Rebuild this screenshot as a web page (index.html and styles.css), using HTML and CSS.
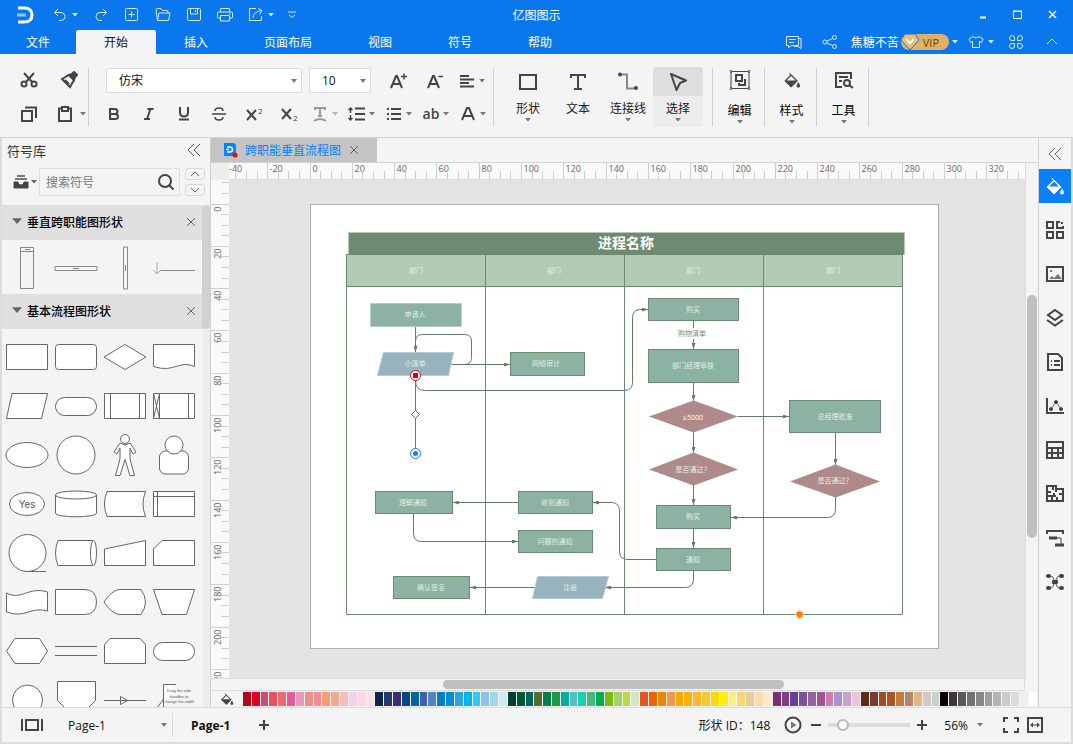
FILE: index.html
```html
<!DOCTYPE html>
<html lang="zh-CN">
<head>
  <meta charset="UTF-8" />
  <meta name="viewport" content="width=device-width, initial-scale=1" />
  <title>亿图图示</title>
  <link rel="stylesheet" href="styles.css">
</head>
<body>
  <svg class="sprite" aria-hidden="true">
    <symbol id="i-caret" viewBox="0 0 6 4"><path d="M0 0h6L3 3.5z" fill="currentColor"/></symbol>
    <symbol id="i-bucket" viewBox="0 0 20 20"><path d="M7 2l2 3" fill="none" stroke="currentColor" stroke-width="2"/><path d="M9 4l7 7-7 7-7-7z" fill="currentColor"/><path class="hole" d="M9 5.500l5 5H4z"/><path d="M17 13q3 5 0 5t0-5" fill="currentColor"/></symbol>
    <symbol id="i-collapse" viewBox="0 0 14 14"><path d="M7 1L1 7l6 6M13 1L7 7l6 6" fill="none" stroke="currentColor"/></symbol>
    <symbol id="i-close" viewBox="0 0 8 8"><path d="M0 0l8 8M8 0L0 8" fill="none" stroke="currentColor"/></symbol>
  </svg>

  <div class="app">
    <header class="titlebar">
      <div class="quick">
        <svg class="logo" width="20" height="18" viewBox="0 0 20 18"><path d="M2 2h6q8 0 8 7t-8 7H2" fill="none" stroke="#fff" stroke-width="3"/><path d="M1 9h9" stroke="#8ec4ff" stroke-width="3"/></svg>
        <div class="split">
          <button class="icon" aria-label="撤销"><svg width="16" height="16" viewBox="0 0 16 16"><path d="M6 2L2.500 5.500 6 9M3 5.500h6q4 0 4 4t-4 4H7"/></svg></button>
          <button class="drop" aria-label="撤销列表"><svg class="caret"><use href="#i-caret"/></svg></button>
        </div>
        <button class="icon" aria-label="重做"><svg width="16" height="16" viewBox="0 0 16 16"><path d="M10 2l3.500 3.500L10 9M13 5.500H7q-4 0-4 4t4 4h2"/></svg></button>
        <button class="icon" aria-label="新建"><svg width="16" height="16" viewBox="0 0 16 16"><rect x="1.500" y="1.500" width="12" height="12" rx="1"/><path d="M7.500 4.500v6M4.500 7.500h6"/></svg></button>
        <button class="icon" aria-label="打开"><svg width="16" height="16" viewBox="0 0 16 16"><path d="M2.500 13.500L1 3q0-1.500 1.500-1.500H6l1.500 2H12q1 0 1 1.500v1M2.500 13.500L4 6h11l-1.500 7.500z"/></svg></button>
        <button class="icon" aria-label="保存"><svg width="16" height="16" viewBox="0 0 16 16"><rect x="1.500" y="1.500" width="13" height="12" rx="1"/><path d="M4.500 1.500v5.500h7V1.500M9.500 3v2"/></svg></button>
        <button class="icon" aria-label="打印"><svg width="16" height="16" viewBox="0 0 16 16"><path d="M3.500 5V1.500h9V5M3.500 11H1.500q-1 0-1-1V6q0-1 1-1h13q1 0 1 1v4q0 1-1 1h-2M3.500 8.500h9v5.500h-9zM12 7h1.500"/></svg></button>
        <div class="split">
          <button class="icon" aria-label="导出"><svg width="16" height="16" viewBox="0 0 16 16"><path d="M8 1.500H1.500v12h12V9M5 11q0-6 8.500-7.500M10 1.500l4 2-2.500 4"/></svg></button>
          <button class="drop" aria-label="导出选项"><svg class="caret"><use href="#i-caret"/></svg></button>
        </div>
        <button class="drop" aria-label="更多"><svg width="8" height="8" viewBox="0 0 8 8"><path d="M0 1h8M1 4l3 2.500L7 4"/></svg></button>
      </div>
      <h1>亿图图示</h1>
      <div class="window-controls">
        <button aria-label="最小化"><svg width="12" height="12" viewBox="0 0 12 12"><path d="M3 8.500h6" stroke-width="2"/></svg></button>
        <button aria-label="最大化"><svg width="12" height="12" viewBox="0 0 12 12"><path d="M1.500 2.500h8v7h-8zM1 2h9"/></svg></button>
        <button aria-label="关闭"><svg width="12" height="12" viewBox="0 0 12 12"><path d="M2 2l7 7M9 2l-7 7" stroke-width="1.500"/></svg></button>
      </div>
    </header>

    <nav class="menubar">
      <div class="tabs">
        <button>文件</button>
        <button class="active">开始</button>
        <button>插入</button>
        <button>页面布局</button>
        <button>视图</button>
        <button>符号</button>
        <button>帮助</button>
      </div>
      <div class="account">
        <button class="icon" aria-label="消息"><svg width="16" height="16" viewBox="0 0 16 16"><path d="M.5 2.500h12v9h-7l-3 2v-2h-2zM3 5.500h7M3 8.500h5M13 4.500h2v10l-3-2H8"/></svg></button>
        <button class="icon" aria-label="分享"><svg width="16" height="16" viewBox="0 0 16 16"><circle cx="3" cy="8" r="2"/><circle cx="12.500" cy="3.500" r="2"/><circle cx="12.500" cy="12.500" r="2"/><path d="M5 7l5.500-2.500M5 9l5.500 2.500"/></svg></button>
        <div class="user">
          <a href="#">焦糖不苦</a>
          <span class="vip"><svg width="18" height="16" viewBox="0 0 18 16"><path d="M4 0h10l4 6-9 10L0 6z" fill="#f0bd68" stroke="#0a78ec"/><path d="M5 5l4 4 4-4" fill="none" stroke="#fff" stroke-width="2"/></svg>VIP</span>
          <button class="drop" aria-label="账户"><svg class="caret"><use href="#i-caret"/></svg></button>
        </div>
        <div class="split">
          <button class="icon" aria-label="主题"><svg width="16" height="16" viewBox="0 0 16 16"><path d="M5 2.500L1 5l1.500 3.500 2-1v6h7v-6l2 1L15 5l-4-2.500q-3 3-6 0z"/></svg></button>
          <button class="drop" aria-label="主题列表"><svg class="caret"><use href="#i-caret"/></svg></button>
        </div>
        <button class="icon" aria-label="应用"><svg width="16" height="16" viewBox="0 0 16 16"><path d="M6.500 6.500h-2.500a2.500 2.500 0 1 1 2.500-2.500zM9.500 6.500h2.500a2.500 2.500 0 1 0-2.500-2.500zM6.500 9.500h-2.500a2.500 2.500 0 1 0 2.500 2.500zM9.500 9.500h2.500a2.500 2.500 0 1 1-2.500 2.500z"/></svg></button>
        <button class="icon" aria-label="收起功能区"><svg width="12" height="12" viewBox="0 0 12 12"><path d="M1 8l5-5 5 5"/></svg></button>
      </div>
    </nav>

    <section class="ribbon">
      <div class="group clipboard">
        <button class="tool" aria-label="剪切"><svg width="18" height="18" viewBox="0 0 18 18"><path d="M4 2l8 9M14 2l-8 9"/><circle cx="4" cy="13" r="2.500"/><circle cx="14" cy="13" r="2.500"/></svg></button>
        <button class="tool" aria-label="格式刷"><svg width="18" height="18" viewBox="0 0 18 18"><path d="M2 8l7-4 5 5-4 7z"/><path d="M9 4l5 5 1-3 2-2-3-3-2 2z" fill="currentColor"/><path d="M5 9l4 4"/></svg></button>
        <button class="tool" aria-label="复制"><svg width="18" height="18" viewBox="0 0 18 18"><path d="M2 6h10v10H2zM5 2.500h11V13"/></svg></button>
        <div class="split">
          <button class="tool narrow" aria-label="粘贴"><svg width="16" height="18" viewBox="0 0 16 18"><path d="M5 3.500H2V16h12V3.500h-3M5 2h6v4H5z"/></svg></button>
          <button class="drop" aria-label="粘贴选项"><svg class="caret"><use href="#i-caret"/></svg></button>
        </div>
      </div>

      <div class="group font">
        <div class="font-row first">
          <div class="select font-name"><select aria-label="字体"><option>仿宋</option></select></div>
          <div class="select font-size"><select aria-label="字号"><option>10</option></select></div>
          <button class="tool wide" aria-label="增大字号"><svg width="18" height="18" viewBox="0 0 18 18"><path d="M2 16L7 4h1l5 12M4 12h7"/><path d="M12 4.500h6M15 1.500v6" stroke-width="1.500"/></svg></button>
          <button class="tool wide" aria-label="减小字号"><svg width="18" height="18" viewBox="0 0 18 18"><path d="M2 16L7 4h1l5 12M4 12h7"/><path d="M12.500 4.500H17" stroke-width="1.500"/></svg></button>
          <div class="split">
            <button class="tool narrow" aria-label="对齐"><svg width="16" height="14" viewBox="0 0 16 14"><path d="M1 2h9M1 5.500h14M1 9h9M1 12.500h14"/></svg></button>
            <button class="drop" aria-label="对齐选项"><svg class="caret"><use href="#i-caret"/></svg></button>
          </div>
        </div>
        <div class="font-row">
          <button class="tool mid" aria-label="粗体"><svg width="14" height="14" viewBox="0 0 14 14"><path d="M3 2h4.500q3 0 3 2.500T7.500 7H3zM3 7h5q3 0 3 2.500T8 12H3z"/></svg></button>
          <button class="tool mid" aria-label="斜体"><svg width="14" height="14" viewBox="0 0 14 14"><path d="M5.500 2h6M2 12h6M8.500 2L5 12"/></svg></button>
          <button class="tool mid" aria-label="下划线"><svg width="14" height="14" viewBox="0 0 14 14"><path d="M3 0v5.500q0 4 4 4t4-4V0M2 12.500h10"/></svg></button>
          <button class="tool mid" aria-label="删除线"><svg width="16" height="14" viewBox="0 0 16 14"><path d="M12 4q0-3-4-3T4 4M12 10q0 3-4 3t-4-3M1 7h14" stroke-width="1.500"/></svg></button>
          <button class="tool mid" aria-label="上标"><svg width="18" height="16" viewBox="0 0 18 16"><path d="M2 4l9 10M11 4L2 14"/><text x="13" y="8">2</text></svg></button>
          <button class="tool mid" aria-label="下标"><svg width="18" height="16" viewBox="0 0 18 16"><path d="M2 3l9 10M11 3L2 13"/><text x="13" y="15">2</text></svg></button>
          <div class="split faded">
            <button class="tool narrow" aria-label="文本样式"><svg width="16" height="16" viewBox="0 0 16 16"><path d="M3 4V2h10v2M8 2v8M6 10h4M2 15q6-4 12 0"/></svg></button>
            <button class="drop" aria-label="文本样式选项"><svg class="caret"><use href="#i-caret"/></svg></button>
          </div>
          <div class="split">
            <button class="tool narrow" aria-label="行距"><svg width="20" height="16" viewBox="0 0 20 16"><path d="M3.500 2v5M3.500 9v5M1.500 4l2-2 2 2M1.500 12l2 2 2-2" stroke-width="1.500"/><path d="M8 2.500h10M8 8h10M8 13.500h10"/></svg></button>
            <button class="drop" aria-label="行距选项"><svg class="caret"><use href="#i-caret"/></svg></button>
          </div>
          <div class="split">
            <button class="tool narrow" aria-label="项目符号"><svg width="16" height="14" viewBox="0 0 16 14"><path d="M1 2h2M5 2h10M1 7h2M5 7h10M1 12h2M5 12h10"/></svg></button>
            <button class="drop" aria-label="项目符号选项"><svg class="caret"><use href="#i-caret"/></svg></button>
          </div>
          <div class="split">
            <button class="tool narrow letters" aria-label="大小写">ab</button>
            <button class="drop" aria-label="大小写选项"><svg class="caret"><use href="#i-caret"/></svg></button>
          </div>
          <div class="split">
            <button class="tool narrow" aria-label="字体颜色"><svg width="16" height="16" viewBox="0 0 16 16"><path d="M2 14L7 2h2l5 12M4 10h8"/></svg></button>
            <button class="drop" aria-label="字体颜色选项"><svg class="caret"><use href="#i-caret"/></svg></button>
          </div>
        </div>
      </div>

      <div class="group insert">
        <button class="big"><svg width="24" height="20" viewBox="0 0 24 20"><path d="M4 3h16v14H4z"/></svg><span>形状</span><svg class="caret"><use href="#i-caret"/></svg></button>
        <button class="big"><svg width="24" height="20" viewBox="0 0 24 20"><path d="M5 6V3h14v3M12 3v14M8 17h8"/></svg><span>文本</span></button>
        <button class="big"><svg width="24" height="20" viewBox="0 0 24 20"><path d="M5 2.500h6v14h8" stroke="#888"/><circle cx="4" cy="2.500" r="1"/><circle cx="20" cy="16" r="1"/></svg><span>连接线</span><svg class="caret"><use href="#i-caret"/></svg></button>
        <button class="big selected"><svg width="24" height="20" viewBox="0 0 24 20"><path d="M5 2l15 6.500-6 2.500-3.500 7z" stroke-linejoin="round"/></svg><span>选择</span><svg class="caret"><use href="#i-caret"/></svg></button>
      </div>

      <div class="group single">
        <button class="big"><svg width="22" height="20" viewBox="0 0 22 20"><path d="M2 1.500h18v17H2z" stroke-width="1"/><path d="M7 5h6v6H7zM16 9v6h-6v-2" /><g fill="#f4f4f4" stroke-width="1"><circle cx="2" cy="1.500" r="1"/><circle cx="20" cy="1.500" r="1"/><circle cx="2" cy="18.500" r="1"/><circle cx="20" cy="18.500" r="1"/></g></svg><span>编辑</span><svg class="caret"><use href="#i-caret"/></svg></button>
      </div>
      <div class="group single">
        <button class="big"><svg width="18" height="20"><use href="#i-bucket"/></svg><span>样式</span><svg class="caret"><use href="#i-caret"/></svg></button>
      </div>
      <div class="group single">
        <button class="big"><svg width="20" height="20" viewBox="0 0 20 20"><path d="M8 17H2V3h15v6M5 7h9M5 11h3"/><circle cx="13" cy="13" r="3"/><path d="M15 15l4 3"/></svg><span>工具</span><svg class="caret"><use href="#i-caret"/></svg></button>
      </div>
    </section>

    <main class="workspace">
      <aside class="library">
        <div class="library-head">
          <h2>符号库</h2>
          <button aria-label="收起符号库"><svg width="14" height="14"><use href="#i-collapse"/></svg></button>
        </div>
        <div class="library-search">
          <button class="stack" aria-label="选择符号库"><svg width="16" height="16" viewBox="0 0 16 16"><path d="M4 2h8M2 5h12" stroke="#777" stroke-width="2"/><path d="M1 8h4q0 3 3 3t3-3h4v6H1z" fill="#444" stroke="#444"/></svg><svg class="caret"><use href="#i-caret"/></svg></button>
          <label class="search">
            <input type="text" placeholder="搜索符号" aria-label="搜索符号">
            <svg width="18" height="18" viewBox="0 0 18 18"><circle cx="8" cy="8" r="6"/><path d="M12 12l4.500 4.500"/></svg>
          </label>
          <div class="steps">
            <button aria-label="上一个"><svg width="10" height="6" viewBox="0 0 10 6"><path d="M1 5l4-4 4 4"/></svg></button>
            <button aria-label="下一个"><svg width="10" height="6" viewBox="0 0 10 6"><path d="M1 1l4 4 4-4"/></svg></button>
          </div>
        </div>
        <div class="library-body">
          <div class="library-scroll">
            <div class="section-head"><svg width="10" height="7"><use href="#i-caret"/></svg><h3>垂直跨职能图形状</h3><button aria-label="关闭"><svg width="8" height="8"><use href="#i-close"/></svg></button></div>
            <div class="shapes lanes">
              <svg viewBox="0 0 44 44"><path d="M15.500 1.500h13v41h-13zM15.500 5.500h13M20 3.500h5"/></svg>
              <svg viewBox="0 0 44 44"><path d="M1 20.500h42v4H1zM19 22.500h6"/></svg>
              <svg viewBox="0 0 44 44"><path d="M20.500 1v42h4V1zM22.500 19v6"/></svg>
              <svg viewBox="0 0 44 44"><path d="M9 24.500h34"/><path d="M5 16v11M1 24l4 4 4-4" stroke="#aaa"/></svg>
            </div>
            <div class="section-head"><svg width="10" height="7"><use href="#i-caret"/></svg><h3>基本流程图形状</h3><button aria-label="关闭"><svg width="8" height="8"><use href="#i-close"/></svg></button></div>
            <div class="shapes">
              <svg viewBox="0 0 44 44"><path d="M1.500 9.500h41v25h-41z"/></svg>
              <svg viewBox="0 0 44 44"><rect x="1.500" y="9.500" width="41" height="25" rx="3"/></svg>
              <svg viewBox="0 0 44 44"><path d="M22 9.500L43 22 22 34.500 1 22z"/></svg>
              <svg viewBox="0 0 44 44"><path d="M1.500 9.500h41v22c-16-7-20 7-41 0z"/></svg>

              <svg viewBox="0 0 44 44"><path d="M7 9.500h35.500l-6 25h-35z"/></svg>
              <svg viewBox="0 0 44 44"><rect x="1.500" y="13.500" width="41" height="18" rx="9"/></svg>
              <svg viewBox="0 0 44 44"><path d="M1.500 9.500h41v25h-41zM7.500 9.500v25M36.500 9.500v25"/></svg>
              <svg viewBox="0 0 44 44"><path d="M1.500 9.500h41v25h-41zM7.500 9.500v25M36.500 9.500v25M1.500 9.500l6 25M7.500 9.500l-6 25"/></svg>

              <svg viewBox="0 0 44 44"><ellipse cx="22" cy="22" rx="21" ry="12.500"/></svg>
              <svg viewBox="0 0 44 44"><circle cx="22" cy="22" r="19"/></svg>
              <svg viewBox="0 0 44 44"><circle cx="22" cy="6" r="4.500"/><path d="M17 10l-6 9 3 2 3-6v11l-4.500 16.500h4.500l5-16 5 16h4.500L27 26V15l3 6 3-2-6-9-5 2z"/></svg>
              <svg viewBox="0 0 44 44"><rect x="7.500" y="18" width="29" height="23" rx="6"/><circle cx="22" cy="12" r="9"/></svg>

              <svg viewBox="0 0 44 44"><ellipse cx="22" cy="22" rx="17.500" ry="11.500"/><text x="22" y="26">Yes</text></svg>
              <svg viewBox="0 0 44 44"><path d="M1.500 13v18c0 5 41 5 41 0V13"/><ellipse cx="22" cy="13" rx="20.500" ry="4"/></svg>
              <svg viewBox="0 0 44 44"><path d="M4 9.500h38.500q-5 12.500 0 25H4q-5-12.500 0-25z"/></svg>
              <svg viewBox="0 0 44 44"><path d="M1.500 9.500h41v25h-41zM5.500 9.500v25M1.500 14.500h41"/></svg>

              <svg viewBox="0 0 44 44"><circle cx="22.500" cy="22" r="18.500"/><path d="M22 40.500h19"/></svg>
              <svg viewBox="0 0 44 44"><path d="M4 9.500h35v25H4q-5-12.500 0-25z"/><ellipse cx="39.500" cy="22" rx="3" ry="12.500"/></svg>
              <svg viewBox="0 0 44 44"><path d="M1.500 18l41-8.500v25h-41z"/></svg>
              <svg viewBox="0 0 44 44"><path d="M10 9.500h32.500v25h-41V18z"/></svg>

              <svg viewBox="0 0 44 44"><path d="M1.500 13c15 8 22-7 41-1v19c-17-5-22 8-41 1z"/></svg>
              <svg viewBox="0 0 44 44"><path d="M1.500 9.500H30q12.500 0 12.500 12.500T30 34.500H1.500z"/></svg>
              <svg viewBox="0 0 44 44"><path d="M16 9.500h22q9 12.500 0 25H16Q8 33 1 22 8 11 16 9.500z"/></svg>
              <svg viewBox="0 0 44 44"><path d="M1.500 9.500h41l-8 25H10z"/></svg>

              <svg viewBox="0 0 44 44"><path d="M10 9.500h24.500L42.500 22l-8 12.500H10L1.500 22z"/></svg>
              <svg viewBox="0 0 44 44"><path d="M1 17.500h42M1 26.500h42"/></svg>
              <svg viewBox="0 0 44 44"><path d="M7 9.500h30l5.500 6v19h-41v-19z"/></svg>
              <svg viewBox="0 0 44 44"><rect x="1.500" y="13.500" width="41" height="18" rx="9"/></svg>

              <svg viewBox="0 0 44 44"><circle cx="22.500" cy="22" r="15"/></svg>
              <svg viewBox="0 0 44 44"><path d="M3.500 3.500h38v19L30 34H15L3.500 22.500z"/></svg>
              <svg viewBox="0 0 44 44"><path d="M1 22.500h42M17.500 18.500v8l7-4z"/></svg>
              <svg viewBox="0 0 44 44"><path d="M24 6.500H11.500V30M11.500 21L5 30"/><g class="note"><text x="27" y="14">Drag the side</text><text x="27" y="20">handles to</text><text x="27" y="25">change the width</text></g></svg>
            </div>
          </div>
          <div class="library-track"><div class="library-thumb"></div></div>
        </div>
      </aside>

      <section class="editor">
        <div class="doc-tabs">
          <div class="doc-tab">
            <svg width="16" height="16" viewBox="0 0 16 16"><path d="M2 1h10l2 2v11H2z" fill="#0a80ff"/><path d="M5 5h2.500q3 0 3 2.500T7.500 10H5M4 7.500h3" fill="none" stroke="#fff" stroke-width="1.500"/><circle cx="13" cy="13" r="2.500" fill="#f00"/></svg>
            <a href="#">跨职能垂直流程图</a>
            <button aria-label="关闭文档"><svg width="8" height="8"><use href="#i-close"/></svg></button>
          </div>
        </div>
        <div class="stage">
          <div class="corner"></div>
          <svg class="ruler-h" id="rulerH"></svg>
          <svg class="ruler-v" id="rulerV"></svg>
          <div class="canvas">
            <svg class="sheet" width="629" height="445" viewBox="310 204 629 445">
              <defs>
                <marker id="arrow" viewBox="0 0 6 4" refX="6" refY="2" markerWidth="6" markerHeight="4" orient="auto" markerUnits="userSpaceOnUse"><path d="M0 0l6 2-6 2z" fill="#5f7d62"/></marker>
              </defs>
              <rect class="lane-title" x="348.500" y="232.500" width="556" height="22"/>
              <rect class="lane-head" x="346.500" y="254.500" width="556" height="32"/>
              <path class="lane-line" d="M346.500 286V614.500h556V286M485.500 254V614M624.500 254V614M763.500 254V614"/>
              <text class="title" x="626" y="248">进程名称</text>

              <g class="link">
                <path d="M415.500 327V352"/>
                <path class="plain" d="M451 364.500H464q7.500 0 7.500-7V341q0-6.500-7-6.500H423q-7.500 0-7.500 7"/>
                <path d="M451 364.500H510"/>
                <path class="plain" d="M415.500 376V450"/>
                <path d="M415.500 380q0 10.500 9 10.500H624q8.500 0 8.500-8V318q0-8.500 8-8.500H648"/>
                <path class="plain" d="M693.500 321V328"/>
                <path d="M693.500 339V349"/>
                <path d="M693.500 383V401"/>
                <path d="M693.500 432V453"/>
                <path d="M693.500 485V505"/>
                <path d="M693.500 529V548"/>
                <path d="M738 416.500H789"/>
                <path d="M835.500 433V465"/>
                <path d="M835.500 497V509q0 8.500-8 8.500H731"/>
                <path d="M656 559.500H628q-8.500 0-8.500-8V511q0-8.500-8-8.500H593"/>
                <path d="M518 502.500H453"/>
                <path d="M413.500 514V533q0 8.500 8 8.500H518"/>
                <path d="M693.500 571V579q0 8.500-8 8.500H605"/>
                <path d="M535 587.500H470"/>
              </g>

              <g class="process">
                <rect class="light" x="370.500" y="303.500" width="91" height="23"/>
                <rect x="510.500" y="352.500" width="74" height="23"/>
                <rect x="648.500" y="298.500" width="90" height="22"/>
                <rect x="648.500" y="349.500" width="90" height="33"/>
                <rect x="789.500" y="400.500" width="91" height="32"/>
                <rect x="656.500" y="505.500" width="74" height="23"/>
                <rect x="656.500" y="548.500" width="74" height="22"/>
                <rect x="375.500" y="491.500" width="77" height="22"/>
                <rect x="518.500" y="491.500" width="74" height="22"/>
                <rect x="518.500" y="530.500" width="74" height="22"/>
                <rect x="393.500" y="576.500" width="76" height="22"/>
              </g>
              <path class="data" d="M383.500 352.500H453.500L448.500 375.500H377.500zM537.500 576.500H608.500L602.500 598.500H532.500z"/>
              <path class="decision" d="M649 416.500L693.500 400.500 738 416.500 693.500 432.500zM649 469.500L693.500 452.500 738 469.500 693.500 485.500zM790 481.500L835.500 464.500 880 481.500 835.500 497.500z"/>

              <g class="label">
                <text x="416" y="273">部门</text>
                <text x="554" y="273">部门</text>
                <text x="693" y="273">部门</text>
                <text x="833" y="273">部门</text>
                <text x="415" y="317">申请人</text>
                <text x="415" y="366">小清单</text>
                <text x="546" y="366">网络审计</text>
                <text x="693" y="312">购买</text>
                <text class="dark" x="692" y="336">购物清单</text>
                <text x="693" y="368">部门经理审核</text>
                <text class="number" x="693" y="420">≥5000</text>
                <text x="693" y="472">是否通过？</text>
                <text x="693" y="519">购买</text>
                <text x="693" y="562">通知</text>
                <text x="835" y="419">总经理批准</text>
                <text x="835" y="483">是否通过？</text>
                <text x="413" y="505">理解通知</text>
                <text x="555" y="505">收到通知</text>
                <text x="555" y="544">问题的通知</text>
                <text x="431" y="590">确认签名</text>
                <text x="570" y="590">注册</text>
              </g>

              <circle cx="415.500" cy="375.500" r="5" fill="#fff" stroke="#d8000f"/>
              <rect x="413" y="373" width="5" height="5" fill="#d8000f"/>
              <path d="M415.500 410.500l4 4-4 4-4-4z" fill="#fff" stroke="#3c6f9c"/>
              <circle cx="415.500" cy="453.500" r="5" fill="#fff" stroke="#0a80ff"/>
              <circle cx="415.500" cy="453.500" r="2.500" fill="#0a80ff"/>
              <circle cx="799.500" cy="614.500" r="4" fill="#ff8000" stroke="#fff"/>
            </svg>
          </div>
          <div class="scroll-v"><div class="thumb"></div></div>
          <div class="scroll-h"><div class="thumb"></div></div>
        </div>
        <div class="palette">
          <button class="fill" aria-label="填充"><svg width="14" height="14"><use href="#i-bucket"/></svg></button>
          <div class="swatches" id="swatches"></div>
        </div>
      </section>

      <aside class="rail">
        <button class="expand" aria-label="展开"><svg width="14" height="14"><use href="#i-collapse"/></svg></button>
        <button class="active" aria-label="填充样式"><svg width="20" height="20"><use href="#i-bucket"/></svg></button>
        <button aria-label="符号"><svg width="20" height="20" viewBox="0 0 20 20"><path d="M2 2h6v6H2zM2 12h6v6H2zM12 12h6v6h-6zM15 2h-3v6h6V6"/><path d="M16 3h2"/></svg></button>
        <button aria-label="图片"><svg width="20" height="20" viewBox="0 0 20 20"><path d="M2 3h16v14H2z"/><path d="M4 15l3-3 2 2 4-4 4 5z" fill="#777" stroke="none"/><path d="M5 7h2" stroke="#777"/></svg></button>
        <button aria-label="图层"><svg width="20" height="20" viewBox="0 0 20 20"><path d="M10 2l7 5-7 5-7-5zM2 12l8 5.500 8-5.500"/></svg></button>
        <button aria-label="文档"><svg width="20" height="20" viewBox="0 0 20 20"><path d="M3 2h10l4 4v12H3z"/><path d="M6 9h1M9 9h6M6 13h1M9 13h6"/></svg></button>
        <button aria-label="图表"><svg width="20" height="20" viewBox="0 0 20 20"><path d="M2 2v15h17"/><path d="M6 13l5-7 5 7" stroke="#777" stroke-width="1"/><g fill="currentColor" stroke-width="1"><circle cx="6" cy="13" r="1.500"/><circle cx="11" cy="6" r="1.500"/><circle cx="16" cy="13" r="1.500"/></g></svg></button>
        <button aria-label="表格"><svg width="20" height="20" viewBox="0 0 20 20"><path d="M2 2h16v16H2zM2 8h16M2 13h16M7 8v10M13 8v10"/></svg></button>
        <button aria-label="平面图"><svg width="20" height="20" viewBox="0 0 20 20"><path d="M11 5V2H2v15h16V5h-7M2 8h4M8 3v3M2 12h5v5M11 5v3M12 17v-4M9 9v3h2M14 10h4" /></svg></button>
        <button aria-label="甘特图"><svg width="20" height="20" viewBox="0 0 20 20"><path d="M2 6V3h16v3"/><path d="M4 10h8M10 17h9" stroke-width="3"/><path d="M12 10h4v6" stroke-width="1"/></svg></button>
        <button aria-label="思维导图"><svg width="20" height="20" viewBox="0 0 20 20"><path d="M5 4q4 0 4 6t-4 6M15 4q-4 0-4 6t4 6" stroke-width="1"/><g fill="currentColor" stroke="none"><rect x="1" y="2" width="5" height="4" rx="2"/><rect x="14" y="2" width="5" height="4" rx="2"/><rect x="1" y="14" width="5" height="4" rx="2"/><rect x="14" y="14" width="5" height="4" rx="2"/><rect x="7" y="8" width="6" height="4" rx="1"/></g></svg></button>
      </aside>
    </main>

    <footer class="statusbar">
      <button class="layout" aria-label="页面视图"><svg width="22" height="14" viewBox="0 0 22 14"><path d="M5 2h12v10H5z"/><path d="M1 1v12M21 1v12"/></svg></button>
      <div class="page-select"><select aria-label="页面"><option>Page-1</option></select></div>
      <button class="page-tab">Page-1</button>
      <button class="add" aria-label="添加页面"><svg width="12" height="12" viewBox="0 0 12 12"><path d="M6 1v10M1 6h10"/></svg></button>
      <div class="status-right">
        <span>形状 ID：148</span>
        <button aria-label="放映"><svg width="18" height="18" viewBox="0 0 18 18"><circle cx="9" cy="9" r="7.500"/><path d="M7 5.500l5.500 3.500L7 12.500z" fill="#777" stroke="none"/></svg></button>
        <button aria-label="缩小"><svg width="12" height="12" viewBox="0 0 12 12"><path d="M1 6h10"/></svg></button>
        <input type="range" min="0" max="100" value="12" aria-label="缩放">
        <button aria-label="放大"><svg width="12" height="12" viewBox="0 0 12 12"><path d="M6 1v10M1 6h10"/></svg></button>
        <button class="zoom">56%<svg class="caret"><use href="#i-caret"/></svg></button>
        <button aria-label="全屏"><svg width="16" height="16" viewBox="0 0 16 16"><path d="M1 5V1h4M11 1h4v4M15 11v4h-4M5 15H1v-4"/></svg></button>
        <button aria-label="适应宽度"><svg width="16" height="16" viewBox="0 0 16 16"><path d="M1 1h14v14H1z"/><path d="M5 8h6" stroke-width="1"/><path d="M3 8l3-2.500v5zM13 8l-3-2.500v5z" fill="currentColor" stroke="none"/></svg></button>
      </div>
    </footer>
  </div>

  <script src="script.js"></script>
</body>
</html>
```
FILE: styles.css
```css
* {
  box-sizing: border-box;
}

body {
  margin: 0;
  font-family: 'Open Sans', 'Noto Sans CJK SC', sans-serif;
  font-size: 12px;
  color: #111;
  background: #f4f4f4;
}

h1, h2, h3 {
  margin: 0;
  font-weight: normal;
}

button {
  display: flex;
  align-items: center;
  justify-content: center;
  margin: 0;
  padding: 0;
  border: none;
  background: none;
  font: inherit;
  color: inherit;
  cursor: pointer;
}

select, input {
  font: inherit;
  color: inherit;
}

a {
  color: inherit;
  text-decoration: none;
}

button svg {
  fill: none;
  stroke: currentColor;
}

svg {
  flex: none;
}

.sprite {
  display: none;
}

.caret {
  width: 6px;
  height: 4px;
  stroke: none;
}

.app {
  display: flex;
  flex-direction: column;
  height: 100vh;
}

/* title bar */
.titlebar {
  display: grid;
  grid-template-columns: 1fr auto 1fr;
  align-items: center;
  height: 30px;
  background: #0a78ec;
  color: #fff;
}

.titlebar h1 {
  font-size: 12px;
}

.quick {
  display: flex;
  align-items: center;
  gap: 11px;
  padding-left: 16px;
}

.quick button, .account button {
  color: #d5e8ff;
}

.logo {
  margin-right: 3px;
}

.split {
  display: flex;
  align-items: center;
}

.icon {
  width: 20px;
  height: 20px;
}

.drop {
  width: 10px;
  height: 20px;
}

.window-controls {
  display: flex;
  justify-content: flex-end;
  padding-right: 3px;
}

.window-controls button {
  width: 35px;
  height: 28px;
}

/* menu tabs */
.menubar {
  display: flex;
  justify-content: space-between;
  height: 24px;
  background: #0a78ec;
  color: #fff;
}

.tabs {
  display: flex;
}

.tabs button {
  padding: 0 28px;
}

.tabs button:first-child {
  padding: 0 26px;
}

.tabs .active {
  background: #f4f4f4;
  color: #111;
  border-radius: 2px 2px 0 0;
}

.account {
  display: flex;
  align-items: center;
  gap: 14px;
  padding-right: 9px;
}

.account .icon {
  margin-right: 2px;
}

.account .split {
  margin-right: -4px;
}

.account .split .icon {
  margin-right: 0;
}

.user {
  display: flex;
  align-items: center;
  margin: 0 -8px 0 -5px;
}

.vip {
  display: flex;
  align-items: center;
  gap: 4px;
  height: 16px;
  margin: 0 1px 0 2px;
  padding-right: 10px;
  border-radius: 8px;
  background: #e0b064;
  color: #6b4710;
  font-size: 11px;
}

/* ribbon */
.ribbon {
  display: flex;
  height: 84px;
  padding: 14px 0 12px 2px;
  border-bottom: 1px solid #d4d4d4;
  color: #444;
}

.group {
  height: 58px;
  border-right: 1px solid #d0d0d0;
}

.ribbon button svg {
  stroke-width: 2;
}

.ribbon .caret {
  color: #777;
}

.clipboard {
  display: grid;
  grid-template-columns: 40px 36px;
  row-gap: 10px;
  padding-left: 10px;
}

.tool {
  width: 34px;
  height: 24px;
}

.tool.wide {
  width: 37px;
}

.tool.mid {
  width: 35px;
}

.tool.narrow {
  width: 20px;
}

.clipboard .split .narrow {
  width: 28px;
}

.tool text {
  font-size: 8px;
  fill: currentColor;
  stroke: none;
}

.tool.letters {
  font-size: 14px;
  font-weight: 600;
}

.font {
  display: flex;
  flex-direction: column;
  gap: 8px;
  padding: 0 2px 0 7px;
}

.font-row {
  display: flex;
  align-items: center;
  height: 26px;
}

.font-row.first {
  padding-left: 10px;
}

.font-row .split {
  width: 37px;
  padding-left: 4px;
}

.faded {
  opacity: 0.5;
}

.select, .page-select {
  position: relative;
  display: flex;
}

.select::after, .page-select::after {
  content: '';
  position: absolute;
  right: 5px;
  top: 50%;
  margin-top: -2px;
  border: 3px solid transparent;
  border-top: 4px solid #777;
  border-bottom: none;
  pointer-events: none;
}

.select select {
  appearance: none;
  width: 100%;
  height: 25px;
  padding: 0 12px;
  border: 1px solid #d9d9de;
  border-radius: 2px;
  background: #fff;
  color: #111;
}

.font-name {
  width: 196px;
}

.font-size {
  width: 62px;
  margin: 0 8px 0 7px;
}

.insert {
  display: flex;
  padding: 0 9px;
}

.big {
  flex-direction: column;
  justify-content: flex-start;
  width: 50px;
  height: 60px;
  margin-top: -1px;
  padding-top: 5px;
  color: #444;
}

.big span {
  margin-top: 8px;
  line-height: 18px;
  color: #222;
}

.selected {
  border-radius: 2px;
  background: linear-gradient(#dedede 29px, #ececec 29px);
}

.single .big {
  width: 51px;
  padding: 3px 0 0 2px;
}

.single .big span {
  margin-top: 12px;
  color: #000;
}

.hole {
  fill: var(--hole, #f4f4f4);
  stroke: none;
}

#i-bucket path {
  stroke-width: 1;
}

/* workspace */
.workspace {
  display: flex;
  flex: 1;
  min-height: 0;
  border-left: 2px solid #dcdcdc;
  border-right: 2px solid #dcdcdc;
}

.library {
  display: flex;
  flex-direction: column;
  width: 209px;
  border-right: 1px solid #cfcfcf;
}

.library-head {
  display: flex;
  align-items: center;
  justify-content: space-between;
  height: 26px;
  padding: 0 9px 2px 5px;
  color: #555;
}

.library-head h2 {
  font-size: 13px;
  color: #333;
}

.library-search {
  display: flex;
  align-items: center;
  height: 41px;
  padding: 0 5px 5px 11px;
}

.stack {
  gap: 2px;
  color: #666;
}

.search {
  display: flex;
  flex: 1;
  align-items: center;
  height: 28px;
  margin: 0 5px 0 2px;
  padding: 0 4px 0 6px;
  border: 1px solid #dedede;
  border-radius: 2px;
}

.search input {
  flex: 1;
  width: 0;
  padding: 0;
  border: none;
  outline: none;
  background: none;
}

.search input::placeholder {
  color: #777;
}

.search svg {
  fill: none;
  stroke: #444;
  stroke-width: 2;
}

.steps {
  display: flex;
  flex-direction: column;
  gap: 4px;
}

.steps button {
  width: 20px;
  height: 12px;
  border: 1px solid #d8d8d8;
  border-radius: 3px;
  color: #666;
}

.library-body {
  display: flex;
  flex: 1;
  min-height: 0;
}

.library-scroll {
  flex: 1;
  overflow: hidden;
}

.library-track {
  width: 8px;
  background: #ededed;
}

.library-thumb {
  height: 124px;
  border-radius: 4px;
  background: #d0d0d0;
}

.section-head {
  display: flex;
  align-items: center;
  gap: 5px;
  height: 35px;
  padding: 0 7px 2px 10px;
  background: #dfdfdf;
  color: #666;
}

.section-head h3 {
  flex: 1;
  font-size: 12px;
  font-weight: 500;
  color: #000;
}

.shapes {
  display: grid;
  grid-template-columns: repeat(4, 49px);
  grid-auto-rows: 49px;
  place-items: center;
  padding-top: 3px;
}

.shapes.lanes {
  padding: 3px 0 2px;
}

.shapes svg {
  width: 44px;
  height: 44px;
  fill: #fff;
  stroke: #666;
}

.shapes.lanes svg {
  fill: none;
  stroke: #888;
}

.shapes text {
  font-family: 'Liberation Sans', sans-serif;
  font-size: 10px;
  text-anchor: middle;
  fill: #555;
  stroke: none;
}

.shapes .note text {
  font-size: 4px;
}

/* editor */
.editor {
  display: flex;
  flex: 1;
  flex-direction: column;
  min-width: 0;
}

.doc-tabs {
  height: 25px;
  border-bottom: 1px solid #d4d4d4;
}

.doc-tab {
  display: flex;
  align-items: center;
  width: 166px;
  height: 24px;
  padding-left: 11px;
  background: #c4c4c4;
  color: #666;
}

.doc-tab a {
  margin: 0 5px 0 7px;
  color: #0a80ff;
}

.doc-tab button {
  padding: 4px;
}

.stage {
  display: grid;
  grid-template-columns: 18px 1fr 13px;
  grid-template-rows: 17px 1fr 13px;
  flex: 1;
  min-height: 0;
}

.corner {
  background: #ededed;
}

.ruler-h, .ruler-v {
  width: 100%;
  height: 100%;
  overflow: hidden;
  background: #fafafa;
  stroke: #d0d0d0;
}

.ruler-h {
  border-bottom: 1px solid #dcdcdc;
}

.ruler-v {
  grid-row: 2;
}

.ruler-h text, .ruler-v text {
  font-size: 9px;
  fill: #666;
  stroke: none;
}

.canvas {
  grid-row: 2;
  grid-column: 2;
  overflow: hidden;
  padding: 24px 0 0 81px;
  background: #e4e4e4;
}

.scroll-v {
  grid-row: 1 / 3;
  grid-column: 3;
  display: grid;
  grid-template-rows: 132fr 243fr 140fr;
  padding: 0 1px;
  border-left: 1px solid #dcdcdc;
}

.scroll-v .thumb {
  grid-row: 2;
  border-radius: 5px;
  background: #bfbfbf;
}

.scroll-h {
  grid-row: 3;
  grid-column: 1 / 3;
  display: grid;
  grid-template-columns: 232fr 342fr 240fr;
  padding: 1px 0;
  border: 1px solid #dcdcdc;
  border-left: none;
}

.scroll-h .thumb {
  grid-column: 2;
  border-radius: 5px;
  background: #bfbfbf;
}

.palette {
  display: flex;
  align-items: center;
  height: 16px;
}

.fill {
  width: 32px;
  color: #444;
}

.swatches {
  display: flex;
  flex: 1;
  gap: 1px;
  height: 14px;
  margin-right: 1px;
}

.swatches button {
  flex: 1;
}

/* sheet and diagram */
.sheet {
  display: block;
  background: #fff;
  outline: 1px solid #b0b0b0;
  outline-offset: -1px;
}

.lane-title {
  fill: #6e8a70;
  stroke: #b4cab4;
}

.lane-head {
  fill: #b3cbb5;
  stroke: #6b8a6d;
}

.lane-line {
  fill: none;
  stroke: #6b8a6d;
}

.title {
  font-size: 14px;
  font-weight: bold;
  text-anchor: middle;
  fill: #fff;
}

.link path {
  fill: none;
  stroke: #5f7d62;
  marker-end: url(#arrow);
}

.link .plain {
  marker-end: none;
}

.process rect {
  fill: #8bb2a3;
  stroke: #6b8a6d;
}

.process .light {
  stroke: #b4d0c6;
}

.data {
  fill: #97b3bd;
  stroke: #b5cad1;
}

.decision {
  fill: #ae8a8a;
}

.label text {
  font-size: 7px;
  text-anchor: middle;
  fill: #e4ece6;
}

.label .dark {
  fill: #7d9080;
}

.label .number {
  fill: #fff;
}

/* right rail */
.rail {
  display: flex;
  flex-direction: column;
  gap: 10px;
  width: 33px;
  border-left: 1px solid #cfcfcf;
  color: #444;
}

.rail button {
  width: 32px;
  height: 34px;
}

.rail button svg {
  stroke-width: 2;
}

.rail .expand {
  height: 31px;
  margin-bottom: -10px;
  color: #666;
}

.rail .expand svg {
  stroke-width: 1;
}

.rail .active {
  --hole: #0a80ff;
  background: #0a80ff;
  color: #fff;
}

/* status bar */
.statusbar {
  display: flex;
  align-items: center;
  height: 37px;
  padding-left: 17px;
  border: 2px solid #dcdcdc;
  border-top-width: 1px;
  color: #111;
}

.statusbar button svg {
  color: #444;
  stroke-width: 2;
}

.layout {
  width: 26px;
}

.page-select {
  width: 128px;
  height: 24px;
  border-right: 1px solid #dcdcdc;
}

.page-select select {
  appearance: none;
  width: 100%;
  padding: 0 0 0 23px;
  border: none;
  background: none;
}

.page-tab {
  padding: 0 28px 0 18px;
  font-weight: bold;
}

.status-right {
  display: flex;
  align-items: center;
  gap: 8px;
  margin-left: auto;
  padding-right: 28px;
}

.status-right span {
  margin-right: 6px;
}

.zoom {
  gap: 9px;
  margin: 0 12px 0 8px;
}

.statusbar .caret {
  stroke: none;
  color: #777;
}

.status-right input {
  appearance: none;
  width: 82px;
  height: 12px;
  margin: 0 -2px;
  background: linear-gradient(#dcdcdc, #dcdcdc) center / 100% 4px no-repeat;
}

.status-right input::-webkit-slider-thumb {
  appearance: none;
  width: 12px;
  height: 12px;
  border: 2px solid #b8b8b8;
  border-radius: 50%;
  background: #fff;
}
```
FILE: script.js
```js
const colors = [
  'b90518', 'dc0420', 'cb4b77', 'ea5161', 'ec6a72', 'e85a9b', 'e59ab8', 'ef8e88', 'ef8e99', 'ff9d72', 'f0aa92', 'f6bdbd', 'ead5e9', 'ffd4e6', 'fbe1e5',
  '0e2350', '22386e', '3f2c72', '04468c', '0065a8', '3d60ac', '5384c2', '007dcc', '008fd3', '2ba6de', '00b4f0', '30c9fb', '8bc2ea', '9fd8ee', 'cfeaf4',
  '00402f', '005a2e', '00655f', '556b2f', '00804a', '1e9a3e', '00b09c', '52c0c0', '16d0b0', '46b97c', '00b050', '7cba10', 'a4d163', 'bdd740', 'cfe7ca',
  'e4541f', 'eb6400', 'f08300', 'f2984e', 'f2a900', 'ffb000', 'fcb92e', 'f8c92e', 'ffd800', 'fff000', 'fcf07c', 'fdd470', 'ebcb97', 'fedcaa', 'fdeacf',
  '7a3070', '833c84', '683f98', '7a549a', '9862a0', '9f568a', 'cf7ab0', 'a892d0', 'c4a4c8', 'ecc3da',
  '5c2a18', '753c2e', '974f28', 'ad5522', 'c27a3e', 'b5866c', 'dfb888', 'd2cac4', 'c8d2ca',
  '000000', '3e3535', '585858', '717171', '888888', '9d9f9e', 'b3b5b4', 'cbcdcc', 'dcdcdc', 'efefef', 'ffffff'
];

document.getElementById('swatches').innerHTML = colors
  .map(c => `<button aria-label="#${c}" style="background:#${c}"></button>`)
  .join('');

// 5 mm between ticks, a label every 20 mm
const step = 42.3 / 4;

function drawRuler(id, origin, vertical) {
  const el = document.getElementById(id);
  const length = vertical ? el.clientHeight : el.clientWidth;
  let out = '';
  for (let i = -8; origin + i * step < length; i++) {
    const p = Math.floor(origin + i * step) + 0.5;
    const major = i % 4 === 0;
    const from = major ? 0 : (vertical ? 10 : 8);
    if (vertical) {
      out += `<path d="M${from} ${p}H18"/>`;
      if (major && i >= 0) out += `<text transform="translate(10 ${p + 2}) rotate(-90)" text-anchor="end">${i * 5}</text>`;
    } else {
      out += `<path d="M${p} ${from}V17"/>`;
      // keep the first label inside the ruler when its tick is scrolled off
      if (major) out += `<text x="${Math.max(0, p + 2)}" y="9">${i * 5}</text>`;
    }
  }
  el.innerHTML = out;
}

function drawRulers() {
  drawRuler('rulerH', 81, false);
  drawRuler('rulerV', 24, true);
}

drawRulers();
window.addEventListener('resize', drawRulers);
```
